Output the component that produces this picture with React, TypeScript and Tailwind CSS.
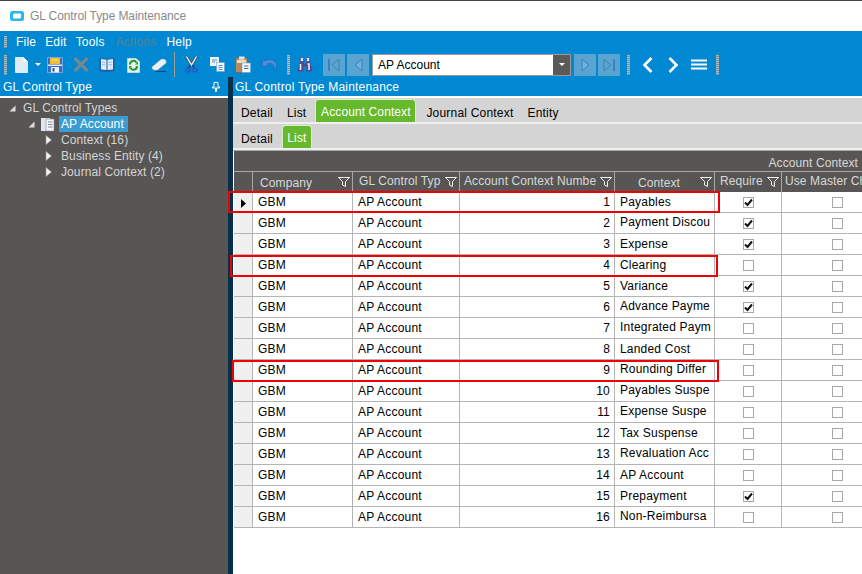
import React from 'react'

type Row = { num: number; context: string; required: boolean; clipped?: boolean }

const rows: Row[] = [
  { num: 1, context: 'Payables', required: true },
  { num: 2, context: 'Payment Discou', required: true, clipped: true },
  { num: 3, context: 'Expense', required: true },
  { num: 4, context: 'Clearing', required: false },
  { num: 5, context: 'Variance', required: true },
  { num: 6, context: 'Advance Payme', required: true, clipped: true },
  { num: 7, context: 'Integrated Paym', required: false, clipped: true },
  { num: 8, context: 'Landed Cost', required: false },
  { num: 9, context: 'Rounding Differ', required: false, clipped: true },
  { num: 10, context: 'Payables Suspe', required: false, clipped: true },
  { num: 11, context: 'Expense Suspe', required: false, clipped: true },
  { num: 12, context: 'Tax Suspense', required: false },
  { num: 13, context: 'Revaluation Acc', required: false, clipped: true },
  { num: 14, context: 'AP Account', required: false },
  { num: 15, context: 'Prepayment', required: true },
  { num: 16, context: 'Non-Reimbursa', required: false, clipped: true },
]

const cols = 'grid grid-cols-[19px_100px_107px_155px_100px_67px_111px]'

function Grip({ h }: { h: string }) {
  return <div className={`w-[3px] shrink-0 bg-[repeating-linear-gradient(#c4b4a0_0_1px,#5f9cc0_1px_2px)] ${h}`} />
}

function Filter() {
  return (
    <svg width="12" height="10" viewBox="0 0 12 10" className="absolute right-[2px] top-[5px]">
      <path d="M0.5 0.5H11.5L7.5 4.5V9.5L4.5 8V4.5Z" fill="none" stroke="#f0f0f0" strokeWidth="1" />
    </svg>
  )
}

function Checkbox({ checked }: { checked: boolean }) {
  return (
    <div className="w-[11px] h-[11px] border border-[#a8a8a8] bg-white flex items-center justify-center">
      {checked && (
        <svg width="9" height="9" viewBox="0 0 9 9">
          <path d="M1 4.5L3.5 7L8 1.5" fill="none" stroke="#111" strokeWidth="2" />
        </svg>
      )}
    </div>
  )
}

function HeadCell({ children, className }: { children: React.ReactNode; className: string }) {
  return (
    <div className={`relative border-r border-[#a8a8a8] whitespace-nowrap overflow-hidden ${className}`}>
      {children}
      <Filter />
    </div>
  )
}

function ToolBtn({ children }: { children: React.ReactNode }) {
  return <div className="w-[26px] h-[22px] flex items-center justify-center shrink-0">{children}</div>
}

function NavBtn({ children }: { children: React.ReactNode }) {
  return <div className="w-[22px] h-[22px] flex items-center justify-center shrink-0 bg-[#5aa5d0]">{children}</div>
}

function TreeArrow() {
  return (
    <svg width="7" height="10" viewBox="0 0 7 10" className="shrink-0">
      <path d="M1 0.5L6.5 5L1 9.5Z" fill="#f2f2f2" stroke="#9a9a9a" strokeWidth="0.6" />
    </svg>
  )
}

function TreeOpen() {
  return (
    <svg width="7" height="7" viewBox="0 0 7 7" className="shrink-0">
      <path d="M6.5 0.5V6.5H0.5Z" fill="#dcdcdc" />
    </svg>
  )
}

export default function App() {
  return (
    <div className="relative w-[862px] h-[574px] overflow-hidden bg-white text-[12px] font-['Liberation_Sans',Arial,sans-serif] border-t border-t-[#444]">
      <div className="h-[30px] flex items-center pl-[10px] gap-[6px] text-[#8a8a8a] text-[12px]">
        <svg width="14" height="10" viewBox="0 0 14 10">
          <rect width="14" height="10" rx="2.5" fill="#29b6e8" />
          <rect x="3" y="2.5" width="8" height="5" rx="1" fill="#fff" />
        </svg>
        <span className="tracking-[-0.1px]">GL Control Type Maintenance</span>
      </div>

      <div className="bg-[#0089d2]">
        <div className="h-[21px] flex items-center pl-[4px]">
          <Grip h="h-[12px]" />
          <div className="flex text-white gap-[9px] ml-[9px] text-[12px] tracking-[0.2px]">
            <span>File</span>
            <span>Edit</span>
            <span>Tools</span>
            <span className="text-[#5c7f93] ml-[2px] mr-[1px]">Actions</span>
            <span>Help</span>
          </div>
        </div>

        <div className="h-[25px] flex items-center pl-[4px]">
          <Grip h="h-[20px]" />
          <div className="flex items-center ml-[1px]">
            <ToolBtn>
              <svg width="13" height="16" viewBox="0 0 13 16">
                <path d="M0.5 0.5H8.5L12.5 4.5V15.5H0.5Z" fill="#dcecf9" stroke="#f4faff" strokeWidth="0.8" />
                <path d="M8.5 0.5V4.5H12.5Z" fill="#fff" />
              </svg>
            </ToolBtn>
            <svg width="6" height="3" viewBox="0 0 6 3" className="ml-[1px]">
              <path d="M0 0H6L3 3Z" fill="#fff" />
            </svg>
            <div className="w-[1px]" />
            <ToolBtn>
              <svg width="16" height="16" viewBox="0 0 16 16">
                <path d="M0.5 0.5H15.5V15.5H0.5Z" fill="#3c6cc4" stroke="#a8c8ec" strokeWidth="0.6" />
                <rect x="3" y="1" width="10" height="6" fill="#f0bd2e" />
                <path d="M5 3H11" stroke="#fbe79a" />
                <rect x="1" y="7.5" width="14" height="1.5" fill="#dfe9f8" />
                <rect x="4" y="10" width="8" height="5.5" fill="#eef2fa" />
                <rect x="5.5" y="11" width="2" height="3.5" fill="#33528c" />
              </svg>
            </ToolBtn>
            <ToolBtn>
              <svg width="16" height="15" viewBox="0 0 16 15">
                <path d="M1.5 1L14.5 14M14.5 1L1.5 14" stroke="#79878f" strokeWidth="3.2" />
              </svg>
            </ToolBtn>
            <ToolBtn>
              <svg width="16" height="15" viewBox="0 0 16 15">
                <path d="M0.5 1L8 2L15.5 1V14L8 15L0.5 14Z" fill="#1f5fa8" />
                <path d="M2 2L7.5 2.8V13L2 12.4ZM14 2L8.5 2.8V13L14 12.4Z" fill="#dcebf7" />
                <path d="M3 5L6.5 5.5M3 7.5L6.5 8M13 5L9.5 5.5M13 7.5L9.5 8" stroke="#8fb5d8" strokeWidth="0.8" />
              </svg>
            </ToolBtn>
            <ToolBtn>
              <svg width="13" height="16" viewBox="0 0 13 16">
                <path d="M0.5 1.5H9L12.5 4.5V15.5H0.5Z" fill="#e9f3e6" stroke="#d8ecf8" strokeWidth="0.6" />
                <path d="M3 7.5A3.5 3.5 0 0 1 9.5 5.5M10 9A3.5 3.5 0 0 1 3.5 11" fill="none" stroke="#1c9a3a" strokeWidth="2" />
                <path d="M8 7.5H11V4.5ZM5 9H2V12Z" fill="#1c9a3a" />
              </svg>
            </ToolBtn>
            <ToolBtn>
              <svg width="16" height="14" viewBox="0 0 16 14">
                <path d="M1 9L10 1.5Q12 0.5 14.5 2Q16 4 14.5 5.5L6.5 12H3Q0.5 11 1 9Z" fill="#eef1f4" stroke="#b4bcc6" strokeWidth="0.5" />
                <path d="M4 13.5H15" stroke="#19496e" strokeWidth="1" />
              </svg>
            </ToolBtn>
          </div>
          <div className="w-[1px] h-[25px] bg-[#a39c90] ml-[2px]" />
          <div className="flex items-center ml-[3px]">
            <ToolBtn>
              <svg width="13" height="17" viewBox="0 0 13 17">
                <path d="M1.5 0.5L6.5 9L11.5 0.5" fill="none" stroke="#3f4750" strokeWidth="2.6" />
                <path d="M1.5 0.5L6.5 9L11.5 0.5" fill="none" stroke="#f2f4f6" strokeWidth="1.4" />
                <path d="M5.5 9L3.4 12M7.5 9L9.6 12" stroke="#23398c" strokeWidth="1.4" fill="none" />
                <circle cx="3" cy="14" r="2" fill="none" stroke="#2a55c8" strokeWidth="1.5" />
                <circle cx="10" cy="14" r="2" fill="none" stroke="#2a55c8" strokeWidth="1.5" />
              </svg>
            </ToolBtn>
            <ToolBtn>
              <svg width="15" height="15" viewBox="0 0 15 15">
                <rect x="0" y="0" width="9" height="9" fill="#eef5fc" />
                <path d="M2 3H7M2 5H5" stroke="#3a6ea5" strokeWidth="0.8" />
                <rect x="6.5" y="5.5" width="8" height="9" fill="#f4f8fc" stroke="#6a96c0" strokeWidth="0.5" />
                <path d="M8.5 8.5H12.5M8.5 10.5H12.5M8.5 12.5H12.5" stroke="#3a6ea5" strokeWidth="0.8" />
              </svg>
            </ToolBtn>
            <ToolBtn>
              <svg width="16" height="17" viewBox="0 0 16 17">
                <rect x="0.5" y="2" width="12" height="14.5" fill="#b9895a" stroke="#7d5a3a" strokeWidth="0.6" />
                <rect x="4" y="0.5" width="5.5" height="3" fill="#e6e6e6" />
                <rect x="2" y="4" width="9" height="3" fill="#e9dcc8" />
                <rect x="7" y="7" width="8.5" height="9.5" fill="#f4f8fc" stroke="#6a96c0" strokeWidth="0.5" />
                <path d="M9 10H13.5M9 12.5H13.5" stroke="#3a6ea5" />
              </svg>
            </ToolBtn>
            <ToolBtn>
              <svg width="15" height="13" viewBox="0 0 15 13">
                <path d="M0.5 6.5V1L3 3.2C6 1 11 1 13.5 4.5C15 7 14.5 10 12 12.5C12.8 9 12 6.5 9.5 5.5C7.5 4.8 6 5.2 5 6L7 8H0.5Z" fill="#4f8de0" stroke="#2a5fb4" strokeWidth="0.6" />
              </svg>
            </ToolBtn>
          </div>
          <div className="ml-[5px]">
            <Grip h="h-[20px]" />
          </div>
          <div className="flex items-center ml-[2px]">
            <ToolBtn>
              <svg width="16" height="15" viewBox="0 0 16 15">
                <path d="M3.5 0.5H6.5V4.5H3.5ZM9.5 0.5H12.5V4.5H9.5Z" fill="#e4e4f4" stroke="#54488e" strokeWidth="0.7" />
                <path d="M3 4.5H7V7H9V4.5H13L15.5 14.5H9.5V9.5H6.5V14.5H0.5Z" fill="#54488e" />
                <path d="M3.5 7V13M10.5 7H12V13" stroke="#eeeef8" strokeWidth="1.6" fill="none" />
              </svg>
            </ToolBtn>
          </div>
          <div className="flex gap-[2px] ml-[5px]">
            <NavBtn>
              <svg width="12" height="14" viewBox="0 0 12 14">
                <path d="M1 1V13" stroke="#3b7fc4" strokeWidth="2" />
                <path d="M11 1L4 7L11 13Z" fill="none" stroke="#3b7fc4" strokeWidth="1" />
              </svg>
            </NavBtn>
            <NavBtn>
              <svg width="9" height="14" viewBox="0 0 9 14">
                <path d="M8 1L1 7L8 13Z" fill="#6fb0dc" stroke="#3b7fc4" strokeWidth="1" />
              </svg>
            </NavBtn>
          </div>
          <div className="ml-[3px] w-[199px] h-[22px] bg-white border border-[#9a9a9a] flex items-center justify-between shrink-0">
            <span className="pl-[5px] text-black">AP Account</span>
            <div className="w-[17px] h-full bg-[#5c5a58] flex items-center justify-center">
              <svg width="6" height="3" viewBox="0 0 6 3">
                <path d="M0 0H6L3 3Z" fill="#fff" />
              </svg>
            </div>
          </div>
          <div className="flex gap-[2px] ml-[3px]">
            <NavBtn>
              <svg width="9" height="14" viewBox="0 0 9 14">
                <path d="M1 1L8 7L1 13Z" fill="#6fb0dc" stroke="#3b7fc4" strokeWidth="1" />
              </svg>
            </NavBtn>
            <NavBtn>
              <svg width="12" height="14" viewBox="0 0 12 14">
                <path d="M11 1V13" stroke="#3b7fc4" strokeWidth="2" />
                <path d="M1 1L8 7L1 13Z" fill="none" stroke="#3b7fc4" strokeWidth="1" />
              </svg>
            </NavBtn>
          </div>
          <div className="ml-[7px]">
            <Grip h="h-[20px]" />
          </div>
          <div className="flex items-center ml-[12px]">
            <svg width="11" height="16" viewBox="0 0 11 16">
              <path d="M9.5 1L2.5 8L9.5 15" fill="none" stroke="#fff" strokeWidth="2.6" />
            </svg>
            <svg width="11" height="16" viewBox="0 0 11 16" className="ml-[15px]">
              <path d="M1.5 1L8.5 8L1.5 15" fill="none" stroke="#fff" strokeWidth="2.6" />
            </svg>
            <svg width="16" height="11" viewBox="0 0 16 11" className="ml-[12px]">
              <path d="M0 1.5H16M0 5.5H16M0 9.5H16" stroke="#fff" strokeWidth="2" />
            </svg>
          </div>
          <div className="ml-[9px]">
            <Grip h="h-[20px]" />
          </div>
        </div>
      </div>

      <div className="flex h-[497px]">
        <div className="w-[228px] shrink-0 flex flex-col">
          <div className="h-[19px] bg-[#0089d2] text-white flex items-center justify-between pl-[3px] pr-[8px] tracking-[0.15px]">
            <span>GL Control Type</span>
            <svg width="8" height="10" viewBox="0 0 8 10">
              <path d="M2 0.5H6V5H7.5V6H0.5V5H2ZM3.5 6V9.5H4.5V6" fill="none" stroke="#fff" strokeWidth="1" />
            </svg>
          </div>
          <div className="h-[2px] bg-white" />
          <div className="flex-1 bg-[#585654] text-[#d4d4d4] pt-[2px] pl-[9px] tracking-[0.1px]">
            <div className="h-[16px] flex items-center gap-[7px]">
              <TreeOpen />
              <span>GL Control Types</span>
            </div>
            <div className="h-[16px] flex items-center pl-[19px]">
              <TreeOpen />
              <svg width="15" height="15" viewBox="0 0 15 15" className="ml-[5px] shrink-0">
                <rect x="1" y="1" width="9" height="13" fill="#dfe6ee" />
                <rect x="6" y="2" width="8" height="12" fill="#f4f6f8" stroke="#7d8894" strokeWidth="0.6" />
                <path d="M8 5H12.5M8 7.5H12.5M8 10H12.5" stroke="#7d8894" />
              </svg>
              <span className="ml-[4px] bg-[#3b9bd3] text-white px-[2px] h-[16px] leading-[16px] w-[69px]">AP Account</span>
            </div>
            <div className="h-[16px] flex items-center pl-[36px] gap-[9px]">
              <TreeArrow />
              <span>Context (16)</span>
            </div>
            <div className="h-[16px] flex items-center pl-[36px] gap-[9px]">
              <TreeArrow />
              <span>Business Entity (4)</span>
            </div>
            <div className="h-[16px] flex items-center pl-[36px] gap-[9px]">
              <TreeArrow />
              <span>Journal Context (2)</span>
            </div>
          </div>
        </div>

        <div className="w-[5px] shrink-0 bg-[#06304a]" />

        <div className="flex-1 min-w-0 flex flex-col text-black">
          <div className="h-[19px] bg-[#0089d2] text-white flex items-center pl-[2px] tracking-[0.2px]">GL Control Type Maintenance</div>
          <div className="h-[2px] bg-white" />

          <div className="h-[24px] bg-[#d4d4d4] flex items-end pl-[8px]">
            <span className="h-[18px] mr-[14px] tracking-[0.2px]">Detail</span>
            <span className="h-[18px] mr-[9px] tracking-[0.2px]">List</span>
            <span className="h-[23px] w-[101px] bg-[#66b82c] border-x border-t border-[#d8eec8] rounded-t-[4px] text-white text-center leading-[24px] tracking-[0.1px] mr-[10px]">Account Context</span>
            <span className="h-[18px] mr-[14px] tracking-[0.2px]">Journal Context</span>
            <span className="h-[18px] tracking-[0.2px]">Entity</span>
          </div>
          <div className="h-[2px] bg-[#f0f0f0]" />
          <div className="h-[24px] bg-[#d4d4d4] flex items-end pl-[8px]">
            <span className="h-[18px] mr-[9px] tracking-[0.2px]">Detail</span>
            <span className="h-[23px] w-[30px] bg-[#66b82c] border-x border-t border-[#d8eec8] rounded-t-[4px] text-white text-center leading-[24px] tracking-[0.2px]">List</span>
          </div>
          <div className="h-[3px] bg-[#f0f0f0] border-b border-[#a8a8a8]" />

          <div className="flex-1 bg-white pl-[1px] overflow-hidden">
            <div className="w-[659px] bg-[#585654] text-[#d8d8d8] tracking-[0.1px]">
              <div className="h-[21px] text-right pr-[35px] pt-[3px] border-b border-[#a8a8a8] whitespace-nowrap overflow-hidden">Account Context</div>
              <div className={`${cols} h-[20px] leading-[16px]`}>
                <div className="border-r border-[#a8a8a8]" />
                <HeadCell className="pl-[7px] pt-[3px]">Company</HeadCell>
                <HeadCell className="pl-[6px] pt-[1px]">GL Control Typ</HeadCell>
                <HeadCell className="pl-[4px] pt-[1px]">Account Context Numbe</HeadCell>
                <HeadCell className="pl-[23px] pt-[3px]">Context</HeadCell>
                <HeadCell className="pl-[5px] pt-[1px]">Require</HeadCell>
                <div className="pl-[3px] pt-[1px] whitespace-nowrap overflow-hidden">Use Master Ch</div>
              </div>
            </div>
            {rows.map((r) => (
              <div key={r.num} className={`${cols} w-[659px] h-[21px] border-b border-[#b4b4b4] leading-[20px] tracking-[0.2px]`}>
                <div className="bg-[#f0f0f0] border-r border-[#b4b4b4] flex items-center justify-center">
                  {r.num === 1 && (
                    <svg width="5" height="9" viewBox="0 0 5 9" className="mt-[2px]">
                      <path d="M0 0L5 4.5L0 9Z" fill="#000" />
                    </svg>
                  )}
                </div>
                <div className="border-r border-[#b4b4b4] pl-[5px]">GBM</div>
                <div className="border-r border-[#b4b4b4] pl-[5px]">AP Account</div>
                <div className="border-r border-[#b4b4b4] pr-[4px] text-right">{r.num}</div>
                <div className={`border-r border-[#b4b4b4] pl-[5px] whitespace-nowrap overflow-hidden ${r.clipped ? 'leading-[18px]' : ''}`}>{r.context}</div>
                <div className="border-r border-[#b4b4b4] flex items-center justify-center">
                  <Checkbox checked={r.required} />
                </div>
                <div className="flex items-center justify-center">
                  <Checkbox checked={false} />
                </div>
              </div>
            ))}
          </div>
        </div>
      </div>

      <div className="absolute left-[228px] top-[190px] w-[492px] h-[22px] border-2 border-[#f00000]" />
      <div className="absolute left-[230px] top-[254px] w-[488px] h-[22px] border-2 border-[#f00000]" />
      <div className="absolute left-[232px] top-[359px] w-[487px] h-[22px] border-2 border-[#f00000]" />
    </div>
  )
}
